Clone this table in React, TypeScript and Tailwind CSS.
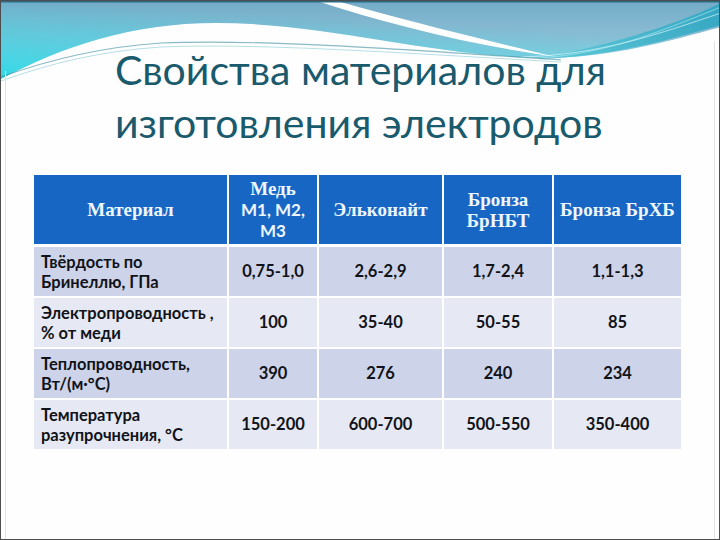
import React from 'react';

const header = [
  { id: 'h-1', lines: [{ t: 'Материал', serif: true }] },
  { id: 'h-2', lines: [{ t: 'Медь', serif: true }, { t: 'М1, М2,', serif: false }, { t: 'М3', serif: false }] },
  { id: 'h-3', lines: [{ t: 'Эльконайт', serif: true }] },
  { id: 'h-4', lines: [{ t: 'Бронза', serif: true }, { t: 'БрНБТ', serif: true }] },
  { id: 'h-5', lines: [{ t: 'Бронза БрХБ', serif: true }] },
];

const rows = [
  { id: 'r-1', label: ['Твёрдость по', 'Бринеллю, ГПа'], values: ['0,75-1,0', '2,6-2,9', '1,7-2,4', '1,1-1,3'] },
  { id: 'r-2', label: ['Электропроводность ,', '% от меди'], values: ['100', '35-40', '50-55', '85'] },
  { id: 'r-3', label: ['Теплопроводность,', 'Вт/(м·°С)'], values: ['390', '276', '240', '234'] },
  { id: 'r-4', label: ['Температура', 'разупрочнения, °С'], values: ['150-200', '600-700', '500-550', '350-400'] },
];

const Wave: React.FC = () => (
  <svg className="absolute top-0 left-0" width="720" height="110" viewBox="0 0 720 110">
    <defs>
      <linearGradient id="sky" x1="0" y1="0" x2="0" y2="1">
        <stop offset="0" stopColor="#74abc7" />
        <stop offset="1" stopColor="#a3d4e3" />
      </linearGradient>
      <linearGradient id="cyanL" x1="0" y1="1" x2="0.45" y2="0.2">
        <stop offset="0" stopColor="#2fd8e6" stopOpacity="1" />
        <stop offset="1" stopColor="#2fd8e6" stopOpacity="0" />
      </linearGradient>
      <linearGradient id="band" x1="0" y1="0" x2="1" y2="0">
        <stop offset="0" stopColor="#5cc9d8" />
        <stop offset="1" stopColor="#2fa6c2" />
      </linearGradient>
    </defs>
    <path d="M0,0 H720 V26 C670,40 610,56 548,57 C430,56 330,22 215,22 C130,22 60,46 0,78 Z" fill="url(#sky)" />
    <path d="M0,0 H720 V26 C670,40 610,56 548,57 C430,56 330,22 215,22 C130,22 60,46 0,78 Z" fill="url(#cyanL)" />
    <path d="M536,58 C610,56 670,38 720,24 L720,2 C670,26 600,46 536,58 Z" fill="url(#band)" opacity="0.9" />
    <path d="M520,56 C600,54 660,32 720,12" stroke="#e6fbff" strokeWidth="0.8" fill="none" opacity="0.8" />
    <path d="M540,57 C610,52 665,28 720,6" stroke="#bff2f8" strokeWidth="0.8" fill="none" opacity="0.7" />
    <path d="M316,0 L336,0 C400,18 470,36 556,56 C470,44 390,24 316,0 Z" fill="#ffffff" />
    <path d="M0,76 C50,58 100,46 160,42 C260,38 400,48 560,59" stroke="#3a8c9e" strokeWidth="1.2" fill="none" opacity="0.6" />
    <path d="M0,80 C50,62 100,50 160,46 C260,42 400,52 560,61" stroke="#86cbd8" strokeWidth="1" fill="none" opacity="0.6" />
    <rect x="0" y="0" width="720" height="1.5" fill="#2c6b84" />
  </svg>
);

const App: React.FC = () => {
  return (
    <div className="relative w-[720px] h-[540px] overflow-hidden bg-[#fefefe] border border-[#4d4d4d]">
      <Wave />
      <div className="absolute left-[4px] top-[70px] bottom-0 w-px bg-[#e2e2e2]" />
      <div className="absolute right-[4px] top-[40px] bottom-0 w-px bg-[#e2e2e2]" />

      <div className="relative pt-[42px] pl-[114px] text-[41px] leading-[53px] text-[#1a5a6d] font-['Lato',sans-serif]">
        <div>Свойства материалов для</div>
        <div>изготовления электродов</div>
      </div>

      <div className="relative ml-[33px] mt-[26px] w-[647px] grid grid-cols-[193px_88px_123px_108px_127px] gap-x-[2px] gap-y-[2px] bg-white">
        {header.map((h) => (
          <div key={h.id} className="h-[69px] bg-[#1766c4] flex flex-col items-center justify-center text-center text-[#eef6ff] font-bold leading-[21px] mb-[1px]">
            {h.lines.map((l) => (
              <span
                key={l.t}
                className={l.serif ? "font-['Liberation_Serif',serif] text-[19px]" : "font-['Lato',sans-serif] text-[17px]"}
              >
                {l.t}
              </span>
            ))}
          </div>
        ))}
        {rows.map((r, i) => {
          const bg = i % 2 === 0 ? 'bg-[#cdd4ea]' : 'bg-[#e6e9f4]';
          return (
            <React.Fragment key={r.id}>
              <div className={`${bg} h-[49px] flex flex-col justify-center pl-[7px] text-[16.5px] leading-[20px] font-bold text-[#111318] font-['Lato',sans-serif]`}>
                {r.label.map((t) => (
                  <span key={t}>{t}</span>
                ))}
              </div>
              {r.values.map((v, j) => (
                <div
                  key={r.id + j}
                  className={`${bg} h-[49px] flex items-center justify-center text-[16.5px] font-bold text-[#111318] font-['Lato',sans-serif]`}
                >
                  {v}
                </div>
              ))}
            </React.Fragment>
          );
        })}
      </div>
    </div>
  );
};

export default App;
